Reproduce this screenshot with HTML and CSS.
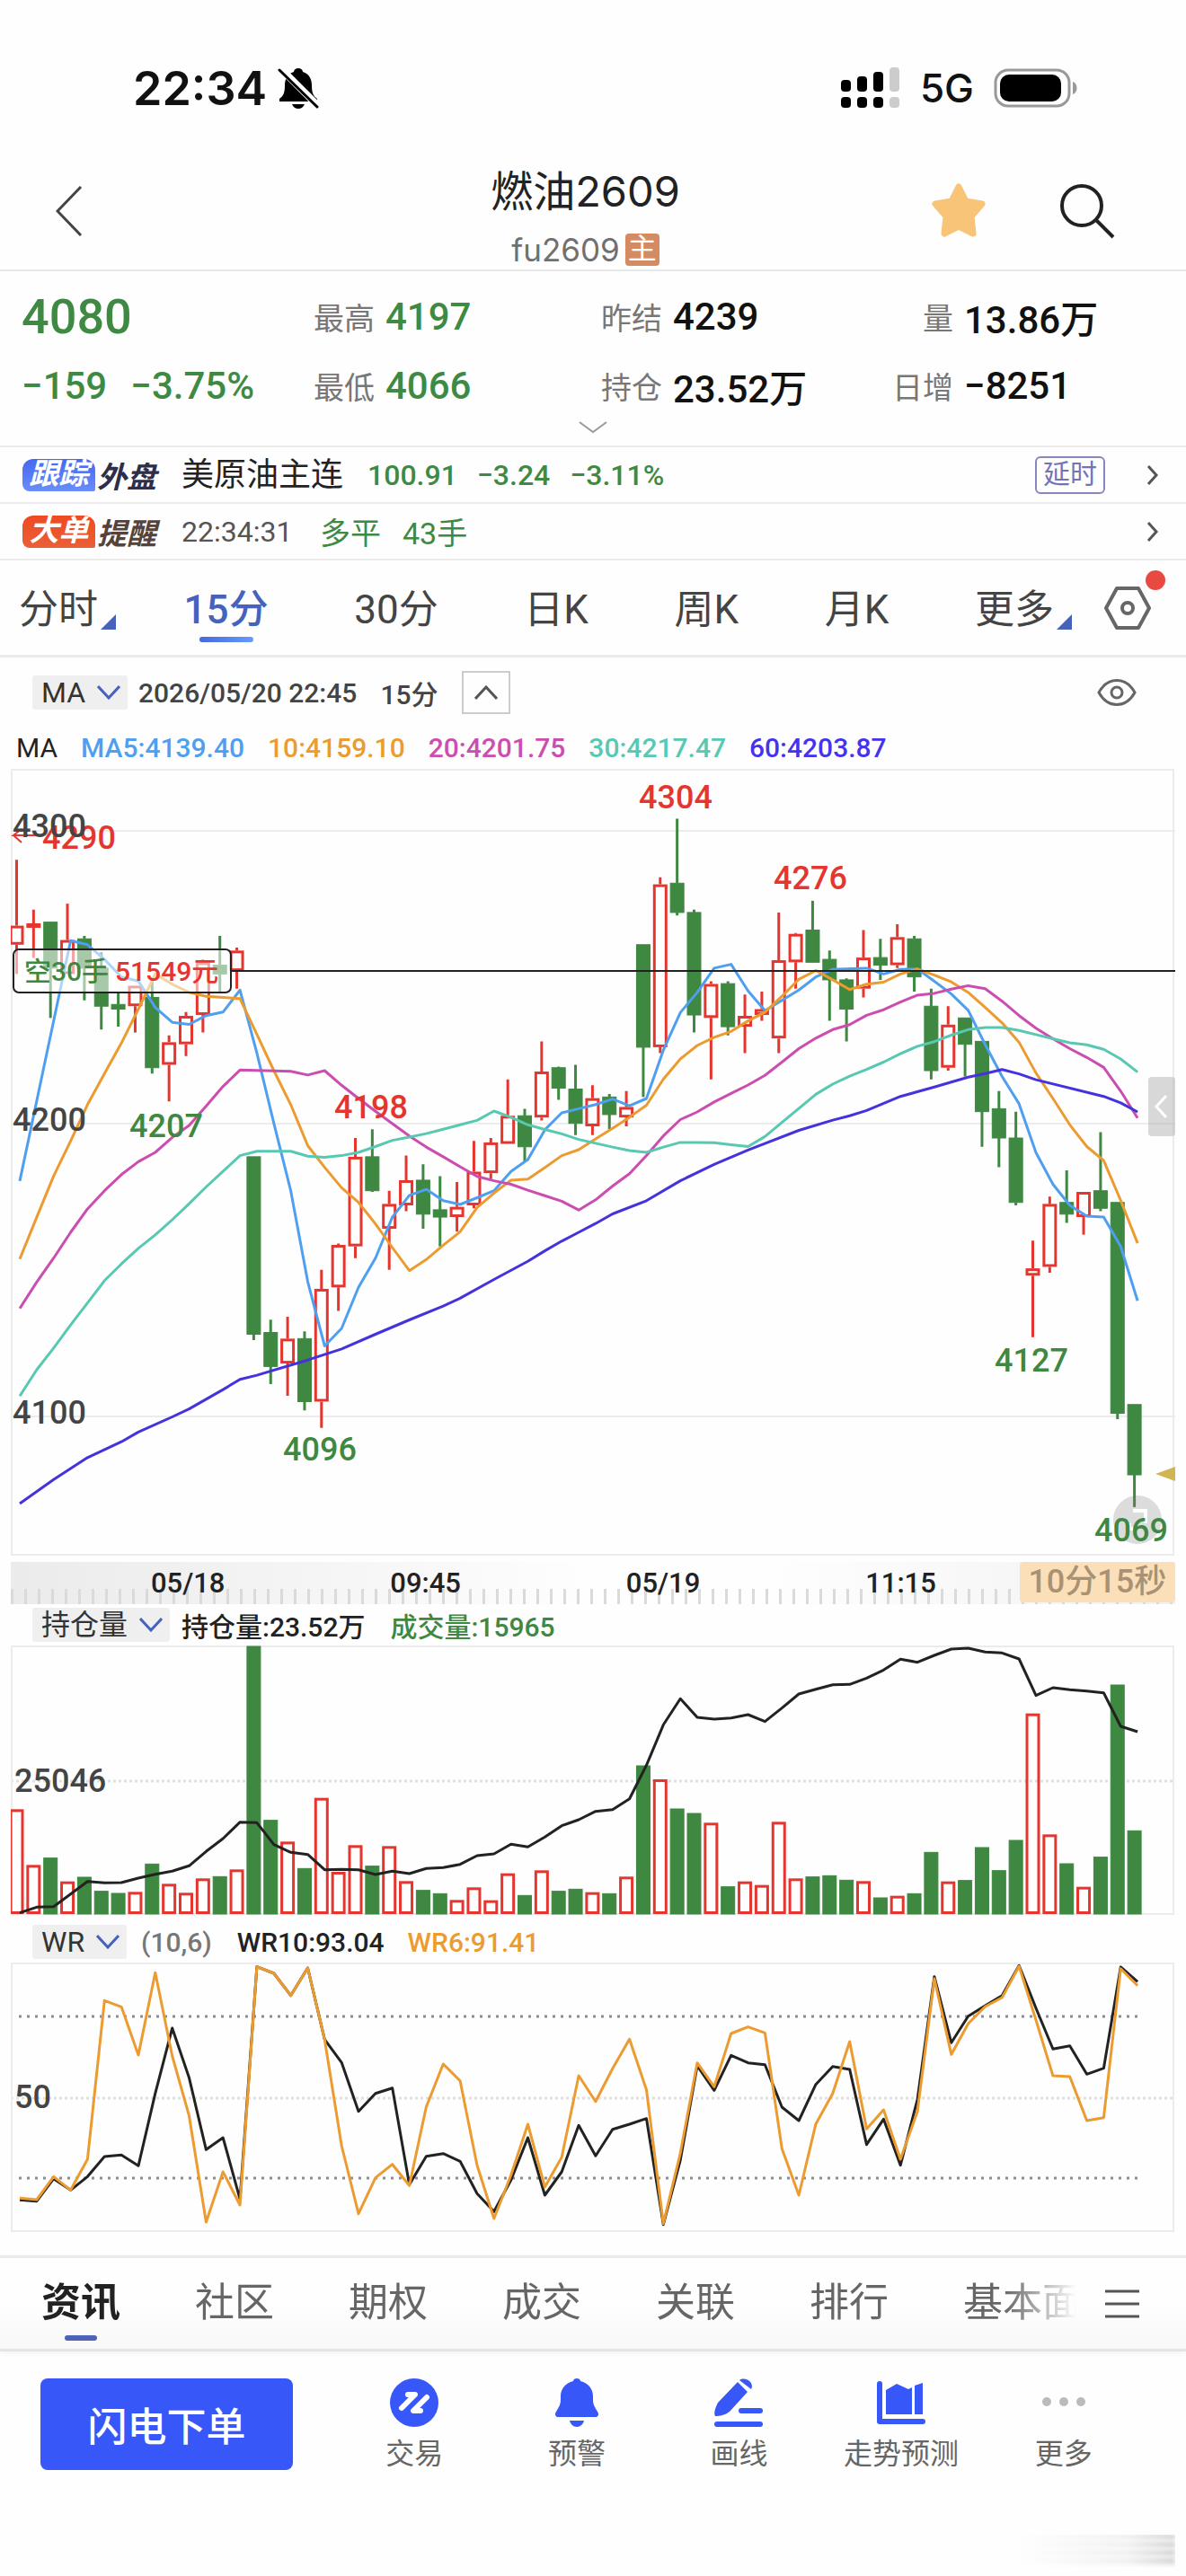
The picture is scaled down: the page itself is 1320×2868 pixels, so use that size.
FILE: index.html
```html
<!DOCTYPE html>
<html lang="zh-Hans">
<head>
  <meta charset="UTF-8">
  <title>燃油2609</title>
  <meta name="viewport" content="width=device-width, initial-scale=1">
  <link rel="stylesheet" href="styles.css">
</head>
<body>
  <!-- 状态栏 -->
  <div class="statusbar">
    <div class="status-left">
      <span class="clock">22:34</span>
      <svg width="46" height="46" viewBox="0 0 46 46">
        <path d="M23 1c3 0 5 2 5 4 7 2 10 8 10 15 0 9 2 12 6 15v3H2v-3c4-3 6-6 6-15 0-7 3-13 10-15 0-2 2-4 5-4zM16 41h14c-1 3-4 5-7 5s-6-2-7-5z"/>
        <path d="M3 1l42 42" stroke="#fff" stroke-width="8"/>
        <path d="M2 3l42 41" stroke="#000" stroke-width="3" stroke-linecap="round"/>
      </svg>
    </div>
    <div class="status-right">
      <svg width="66" height="46" viewBox="0 0 66 46">
        <g>
          <rect x="0" y="14" width="11" height="13" rx="4"/>
          <rect x="18" y="10" width="11" height="17" rx="4"/>
          <rect x="36" y="5" width="11" height="22" rx="4"/>
          <rect x="54" y="0" width="11" height="27" rx="4" fill="#ccc"/>
          <rect x="0" y="33" width="11" height="12" rx="4"/>
          <rect x="18" y="33" width="11" height="12" rx="4"/>
          <rect x="36" y="33" width="11" height="12" rx="4"/>
          <rect x="54" y="33" width="11" height="12" rx="4" fill="#ccc"/>
        </g>
      </svg>
      <span class="network">5G</span>
      <svg width="94" height="44" viewBox="0 0 94 44">
        <rect x="2" y="2" width="82" height="40" rx="14" fill="none" stroke="#999" stroke-width="3"/>
        <rect x="7" y="7" width="68" height="30" rx="10"/>
        <path d="M88 15c6 2 6 12 0 14z" fill="#999"/>
      </svg>
    </div>
  </div>

  <!-- 标题 -->
  <header class="header">
    <button class="icon-btn" aria-label="返回">
      <svg width="30" height="56" viewBox="0 0 30 56" fill="none" stroke="#444" stroke-width="3"><path d="M28 1L2 28l26 27"/></svg>
    </button>
    <div class="title-box">
      <h1 class="title">燃油2609</h1>
      <div class="subtitle">fu2609<span class="badge-main">主</span></div>
    </div>
    <div class="header-tools">
      <button class="icon-btn" aria-label="自选">
        <svg width="62" height="62" viewBox="0 0 62 62"><path d="M31 4l8 16 18 3-12 14 2 19-16-8-16 8 2-19L5 23l18-3z" fill="#f7c478" stroke="#f7c478" stroke-width="7" stroke-linejoin="round"/></svg>
      </button>
      <button class="icon-btn" aria-label="搜索">
        <svg width="62" height="62" viewBox="0 0 62 62" fill="none" stroke="#222" stroke-width="4"><circle cx="25" cy="25" r="22"/><path d="M41 41l19 19"/></svg>
      </button>
    </div>
  </header>

  <!-- 行情 -->
  <section class="quote">
    <div class="quote-grid">
      <div class="price down">4080</div>
      <div class="cell"><span class="label">最高</span><span class="num down">4197</span></div>
      <div class="cell"><span class="label">昨结</span><span class="num">4239</span></div>
      <div class="cell"><span class="label label-right">量</span><span class="num">13.86万</span></div>
      <div class="change down"><span>−159</span><span>−3.75%</span></div>
      <div class="cell"><span class="label">最低</span><span class="num down">4066</span></div>
      <div class="cell"><span class="label">持仓</span><span class="num">23.52万</span></div>
      <div class="cell"><span class="label label-right">日增</span><span class="num">−8251</span></div>
    </div>
    <button class="quote-more" aria-label="展开">
      <svg width="32" height="14" viewBox="0 0 32 14" fill="none" stroke="#999" stroke-width="2"><path d="M1 1l15 11L31 1"/></svg>
    </button>
  </section>

  <a class="news" href="#">
    <span class="tag tag-blue">跟踪</span><span class="tag-text tag-navy">外盘</span>
    <span class="news-name">美原油主连</span>
    <span class="news-num down"><b>100.91</b><b>−3.24</b><b>−3.11%</b></span>
    <span class="delay">延时</span>
    <svg class="arrow" width="14" height="22" viewBox="0 0 14 22" fill="none" stroke="#555" stroke-width="3"><path d="M2 1l9 10-9 10"/></svg>
  </a>
  <a class="news" href="#">
    <span class="tag tag-red">大单</span><span class="tag-text tag-brown">提醒</span>
    <span class="news-time">22:34:31</span>
    <span class="news-deal down"><span>多平</span><span>43手</span></span>
    <svg class="arrow" width="14" height="22" viewBox="0 0 14 22" fill="none" stroke="#555" stroke-width="3"><path d="M2 1l9 10-9 10"/></svg>
  </a>

  <!-- 周期 -->
  <nav class="periods">
    <div class="period-list">
      <button class="period has-more">分时</button>
      <button class="period active">15分</button>
      <button class="period">30分</button>
      <button class="period">日K</button>
      <button class="period">周K</button>
      <button class="period">月K</button>
      <button class="period has-more">更多</button>
    </div>
    <button class="icon-btn setting" aria-label="设置">
      <svg width="52" height="48" viewBox="0 0 52 48" fill="none" stroke="#666" stroke-width="4"><path d="M14 2h24l12 22-12 22H14L2 24z" stroke-linejoin="round"/><circle cx="26" cy="24" r="6"/></svg>
      <i class="dot"></i>
    </button>
  </nav>

  <main class="charts">
    <div class="toolbar">
      <label class="drop">
        <select aria-label="主图指标"><option>MA</option></select>
        <svg width="26" height="16" viewBox="0 0 26 16"><path d="M1 1l12 13L25 1"/></svg>
      </label>
      <span class="tool-date">2026/05/20 22:45</span>
      <span class="tool-period">15分</span>
      <button class="fold" aria-label="收起">
        <svg width="26" height="16" viewBox="0 0 26 16" fill="none" stroke="#555" stroke-width="3"><path d="M1 15L13 2l12 13"/></svg>
      </button>
      <button class="icon-btn eye" aria-label="显示">
        <svg width="44" height="32" viewBox="0 0 44 32" fill="none" stroke="#666" stroke-width="3"><path d="M2 16C12-2 32-2 42 16 32 34 12 34 2 16z"/><circle cx="22" cy="16" r="6"/></svg>
      </button>
    </div>
    <div class="legend">
      <span class="legend-name">MA</span>
      <span class="ma5">MA5:4139.40</span>
      <span class="ma10">10:4159.10</span>
      <span class="ma20">20:4201.75</span>
      <span class="ma30">30:4217.47</span>
      <span class="ma60">60:4203.87</span>
    </div>

    <svg class="chart" viewBox="0 0 1296 876">
      <g class="grid">
        <path d="M0 69H1296M0 395H1296M0 721H1296"/>
        <rect x="1" y="1" width="1293" height="874"/>
      </g>
      <g id="candles"></g>
      <g id="ma-lines" class="lines"></g>
      <path d="M245 225H1296" stroke="#222" stroke-width="2"/>
      <rect x="3" y="201" width="242" height="48" rx="6" fill="#fff" fill-opacity=".55" stroke="#222" stroke-width="2"/>
      <g class="pos-text">
        <text x="15" y="236" class="t-green">空30手</text>
        <text x="116" y="236" class="t-red">51549元</text>
      </g>
      <circle cx="1254" cy="836" r="27" fill="#777" fill-opacity=".25"/>
      <path d="M1249 826h14v14M1249 846h-4v-6" fill="none" stroke="#fff" stroke-width="4"/>
      <g class="marks t-red">
        <path d="M36 74H3l9-7M3 74l9 8" fill="none" stroke="#e5352f" stroke-width="2"/>
        <text x="76" y="89">4290</text>
        <text x="401" y="389">4198</text>
        <text x="740" y="44">4304</text>
        <text x="890" y="134">4276</text>
      </g>
      <g class="marks t-green">
        <text x="173" y="410">4207</text>
        <text x="344" y="770">4096</text>
        <text x="1136" y="671">4127</text>
        <text x="1247" y="860">4069</text>
      </g>
      <g class="scale">
        <text x="2" y="76">4300</text>
        <text x="2" y="403">4200</text>
        <text x="2" y="729">4100</text>
      </g>
      <path d="M1274 785l22-8v16z" fill="#d0b555"/>
      <rect x="1266" y="343" width="30" height="66" rx="4" fill="#aaa" fill-opacity=".45"/>
      <path d="M1286 364l-11 12 11 12" fill="none" stroke="#fff" stroke-width="3"/>
    </svg>

    <div class="axis">
      <span>05/18</span><span>09:45</span><span>05/19</span><span>11:15</span>
      <span class="countdown">10分15秒</span>
    </div>

    <div class="panel-head">
      <label class="drop">
        <select aria-label="副图指标一"><option>持仓量</option></select>
        <svg width="26" height="16" viewBox="0 0 26 16"><path d="M1 1l12 13L25 1"/></svg>
      </label>
      <span class="v-oi">持仓量:23.52万</span>
      <span class="v-vol">成交量:15965</span>
    </div>
    <svg class="chart" viewBox="0 0 1296 300">
      <g class="grid">
        <path d="M0 151H1296" class="dotted"/>
        <rect x="1" y="1" width="1293" height="298"/>
      </g>
      <g id="volumes"></g>
      <g id="oi-line" class="lines"></g>
      <g class="scale"><text x="4" y="163">25046</text></g>
    </svg>

    <div class="panel-head panel-wr">
      <label class="drop">
        <select aria-label="副图指标二"><option>WR</option></select>
        <svg width="26" height="16" viewBox="0 0 26 16"><path d="M1 1l12 13L25 1"/></svg>
      </label>
      <span class="v-param">(10,6)</span>
      <span class="v-wr10">WR10:93.04</span>
      <span class="v-wr6">WR6:91.41</span>
    </div>
    <svg class="chart" viewBox="0 0 1296 300">
      <g class="grid">
        <path d="M0 151H1296" class="dotted"/>
        <path d="M9 60H1254M9 240H1254" class="limit"/>
        <rect x="1" y="1" width="1293" height="298"/>
      </g>
      <g id="wr-lines" class="lines"></g>
      <g class="scale"><text x="4" y="162">50</text></g>
    </svg>
  </main>

  <!-- 底部栏目 -->
  <nav class="sections">
    <div class="section-list">
      <a class="active" href="#">资讯</a>
      <a href="#">社区</a>
      <a href="#">期权</a>
      <a href="#">成交</a>
      <a href="#">关联</a>
      <a href="#">排行</a>
      <a href="#">基本面</a>
    </div>
    <button class="icon-btn" aria-label="菜单">
      <svg width="38" height="32" viewBox="0 0 38 32" stroke="#555" stroke-width="3"><path d="M0 2h38M0 16h38M0 30h38"/></svg>
    </button>
  </nav>

  <footer class="actions">
    <button class="order">闪电下单</button>
    <div class="action-list">
      <button class="action">
        <svg viewBox="0 0 54 54"><circle cx="27" cy="27" r="27"/><path d="M20 18h8L13 33M41 21L26 36h8" fill="none" stroke="#fff" stroke-width="6" stroke-linecap="round" stroke-linejoin="round"/></svg>
        交易
      </button>
      <button class="action">
        <svg viewBox="0 0 54 54"><path d="M23 3c0-4 8-4 8 0 9 2 14 9 14 17 0 8 0 9 5 17 2 3 1 6-3 6H7c-4 0-5-3-3-6 5-8 5-9 5-17C9 12 14 5 23 3zM19 47h16c-1 4-4 7-8 7s-7-3-8-7z"/></svg>
        预警
      </button>
      <button class="action">
        <svg viewBox="0 0 54 54"><path d="M26 4l11 11-20 22c-5 4-11 5-16 5-2-3 0-9 3-15zM28 2c7-5 17 3 13 10z"/><rect x="27" y="33" width="27" height="6" rx="3"/><rect y="48" width="54" height="6" rx="3"/></svg>
        画线
      </button>
      <button class="action">
        <svg viewBox="0 0 54 54"><path d="M3 6v42h48" fill="none" stroke="#3757f8" stroke-width="6" stroke-linecap="round" stroke-linejoin="round"/><path d="M10 13l12-7 13 6 4-2v30H10zM42 8l9-3v35h-9z"/></svg>
        走势预测
      </button>
      <button class="action">
        <svg viewBox="0 0 54 54"><g fill="#bbb"><circle cx="8" cy="26" r="5"/><circle cx="27" cy="26" r="5"/><circle cx="46" cy="26" r="5"/></g></svg>
        更多
      </button>
    </div>
    <div class="smudge"></div>
  </footer>

  <script src="chart.js"></script>
</body>
</html>
```
FILE: styles.css
```css
* {
  box-sizing: border-box;
}
body {
  margin: 0;
  background: #fefefe;
  color: #111;
  font-family: Roboto, "Noto Sans CJK SC", sans-serif;
  font-size: 32px;
  overflow-x: hidden;
}
button, select {
  font: inherit;
  color: inherit;
  border: 0;
  background: none;
  padding: 0;
  margin: 0;
  cursor: pointer;
}
a {
  color: inherit;
  text-decoration: none;
}
svg {
  display: block;
  flex: none;
}
.down { color: #3f8a43; }
.icon-btn {
  display: flex;
  align-items: center;
}

/* 状态栏 */
.statusbar {
  height: 180px;
  padding: 16px 120px 0 148px;
  display: flex;
  align-items: center;
  justify-content: space-between;
  font-family: Inter, "Liberation Sans", sans-serif;
}
.status-left, .status-right {
  display: flex;
  align-items: center;
}
.status-left { gap: 12px; }
.status-right { gap: 22px; }
.clock {
  font-size: 52px;
  font-weight: 600;
}
.network {
  font-size: 44px;
  font-weight: 500;
}

/* 标题 */
.header {
  display: grid;
  grid-template-columns: 1fr auto 1fr;
  height: 122px;
  padding: 0 79px 0 62px;
  border-bottom: 2px solid #e8e8e8;
}
.header .icon-btn { height: 110px; }
.header-tools {
  display: flex;
  justify-content: flex-end;
  gap: 81px;
}
.title-box {
  padding-top: 8px;
  text-align: center;
  font-family: Inter, "Noto Sans CJK SC", sans-serif;
}
.title {
  margin: 0;
  font-size: 47px;
  line-height: 50px;
  font-weight: 400;
  color: #222;
}
.subtitle {
  display: flex;
  align-items: center;
  justify-content: center;
  gap: 6px;
  margin-top: 20px;
  font-size: 35px;
  line-height: 40px;
  color: #707070;
}
.badge-main {
  width: 38px;
  height: 36px;
  line-height: 34px;
  border-radius: 4px;
  background: #d58b62;
  color: #fff;
  font-size: 32px;
}

/* 行情 */
.quote {
  padding-top: 12px;
  border-bottom: 2px solid #ebebeb;
}
.quote-grid {
  display: grid;
  grid-template-columns: 325fr 320fr 324fr 327fr;
  grid-auto-rows: 77px;
  align-items: center;
  padding-left: 24px;
}
.price {
  font-size: 54px;
  font-weight: 500;
}
.change {
  display: flex;
  gap: 26px;
  font-size: 42px;
  font-weight: 500;
}
.cell {
  display: flex;
  align-items: center;
  gap: 12px;
}
.label {
  min-width: 68px;
  font-size: 34px;
  color: #777;
}
.label-right { text-align: right; }
.num {
  font-size: 42px;
  font-weight: 500;
}
.quote-more {
  display: block;
  width: 100%;
  height: 28px;
}
.quote-more svg { margin: 0 auto 12px; }

/* 消息条 */
.news {
  display: flex;
  align-items: center;
  height: 63px;
  padding: 0 30px 0 25px;
  border-bottom: 2px solid #ebebeb;
}
.tag {
  width: 81px;
  height: 36px;
  line-height: 34px;
  border-radius: 12px 12px 2px 8px;
  text-align: center;
  color: #fff;
  font-size: 33px;
  font-weight: 700;
  font-style: italic;
}
.tag-blue { background: linear-gradient(#4468f0, #6a8dfa); }
.tag-red { background: linear-gradient(#ee4a22, #ea6038); }
.tag-text {
  width: 96px;
  padding-left: 2px;
  font-size: 33px;
  font-weight: 700;
  font-style: italic;
}
.tag-navy { color: #2e2e48; }
.tag-brown { color: #55433a; }
.news-name {
  width: 207px;
  font-size: 36px;
  line-height: 40px;
  color: #222;
}
.news-num {
  display: flex;
  gap: 22px;
}
.news-num b { font-weight: 500; }
.news-time {
  width: 154px;
  color: #555;
}
.news-deal {
  display: flex;
  gap: 24px;
  font-size: 34px;
}
.delay {
  margin-left: auto;
  width: 78px;
  height: 42px;
  line-height: 36px;
  border: 2px solid #8786bd;
  border-radius: 6px;
  text-align: center;
  font-size: 30px;
  color: #7573b3;
}
.news .arrow { margin-left: auto; }
.news .delay + .arrow { margin-left: 46px; }

/* 周期 */
.periods {
  display: flex;
  align-items: center;
  height: 108px;
  padding: 0 39px 0 21px;
  border-bottom: 3px solid #ebebeb;
}
.period-list {
  flex: 1;
  display: flex;
  justify-content: space-between;
}
.period {
  position: relative;
  height: 105px;
  padding-bottom: 4px;
  font-size: 44px;
  color: #444;
}
.period.active {
  color: #4662bd;
  font-weight: 500;
}
.period.active::after {
  content: "";
  position: absolute;
  left: 50%;
  bottom: 14px;
  width: 60px;
  height: 6px;
  margin-left: -30px;
  border-radius: 3px;
  background: linear-gradient(90deg, #4668e0, #669bff);
}
.period.has-more::after {
  content: "";
  position: absolute;
  right: -20px;
  bottom: 28px;
  border-left: 17px solid transparent;
  border-bottom: 17px solid #4662bd;
}
.setting {
  position: relative;
  margin-left: 56px;
}
.dot {
  position: absolute;
  right: -16px;
  top: -18px;
  width: 22px;
  height: 22px;
  border-radius: 50%;
  background: #e84a42;
}

/* 图表 */
.charts {
  padding: 15px 12px 26px;
}
.toolbar {
  display: flex;
  align-items: center;
  height: 48px;
  padding: 0 43px 0 24px;
  font-size: 30px;
  color: #444;
}
.drop {
  display: flex;
  align-items: center;
  position: relative;
  height: 38px;
  background: #efefef;
  border-radius: 3px;
  font-size: 32px;
  color: #333;
}
.drop select {
  appearance: none;
  height: 38px;
  padding: 0 46px 0 10px;
}
.drop svg {
  position: absolute;
  right: 8px;
  pointer-events: none;
  fill: none;
  stroke: #4662bd;
  stroke-width: 3;
}
.tool-date {
  margin-left: 12px;
  font-weight: 500;
}
.tool-period {
  margin-left: 26px;
  font-weight: 500;
}
.fold {
  display: flex;
  align-items: center;
  justify-content: center;
  width: 54px;
  height: 48px;
  margin-left: 26px;
  border: 2px solid #ccc;
}
.eye { margin-left: auto; }
.legend {
  display: flex;
  gap: 26px;
  height: 40px;
  margin: 18px 0 3px;
  padding-left: 6px;
  font-size: 30px;
  font-weight: 500;
  line-height: 40px;
}
.legend-name {
  color: #222;
  font-weight: 400;
}
.ma5 { color: #4f9ff0; }
.ma10 { color: #ec9b30; }
.ma20 { color: #cc4db0; }
.ma30 { color: #58c8b2; }
.ma60 { color: #4433ee; }
.chart {
  width: 100%;
  height: auto;
}
.grid * {
  fill: none;
  stroke: #ececec;
  stroke-width: 2;
}
.grid .dotted {
  stroke: #e0e0e0;
  stroke-width: 3;
  stroke-dasharray: 3 3;
}
.grid .limit {
  stroke: #8c8c96;
  stroke-width: 3;
  stroke-dasharray: 3 6;
}
.lines polyline {
  fill: none;
  stroke-width: 3;
  stroke-linejoin: round;
}
.up-bar {
  fill: none;
  stroke: #e5352f;
  stroke-width: 3;
}
.down-bar {
  fill: #3e8841;
  stroke: #3e8841;
}
.scale text {
  font-size: 36px;
  font-weight: 500;
  fill: #444;
}
.marks text {
  font-size: 36px;
  font-weight: 500;
  text-anchor: middle;
}
.pos-text text {
  font-size: 30px;
  font-weight: 500;
}
.t-red { fill: #e5352f; }
.t-green { fill: #3e8841; }
.axis {
  display: flex;
  height: 47px;
  margin: 7px 0 4px;
  padding-left: 65px;
  font-size: 31px;
  font-weight: 500;
  line-height: 47px;
  text-align: center;
  color: #222;
  background:
    repeating-linear-gradient(90deg, #dadada 0 3px, transparent 3px 15px) 0 100% / 100% 17px no-repeat,
    linear-gradient(90deg, #ebebeb, #fefefe 50%, #fefefe 65%, #f2f2f2);
}
.axis span { flex: 264; }
.axis .countdown {
  flex: 173;
  height: 45px;
  border-radius: 4px;
  background: #fadfb8;
  color: #a99273;
  font-size: 36px;
  line-height: 45px;
}
.panel-head {
  display: flex;
  align-items: center;
  height: 38px;
  margin-bottom: 4px;
  padding-left: 24px;
  font-size: 30px;
  font-weight: 500;
}
.panel-head .drop { font-weight: 400; }
.panel-wr {
  margin: 11px 0 4px;
}
.v-oi {
  margin-left: 13px;
  color: #222;
}
.v-vol {
  margin-left: 28px;
  color: #3e8841;
}
.v-param {
  margin-left: 16px;
  color: #777;
}
.v-wr10 {
  margin-left: 28px;
  color: #222;
}
.v-wr6 {
  margin-left: 26px;
  color: #ec9b30;
}

/* 底部栏目 */
.sections {
  display: flex;
  align-items: center;
  height: 107px;
  padding: 0 52px 0 46px;
  border-top: 3px solid #ebebeb;
  border-bottom: 3px solid #e4e4e4;
  background: linear-gradient(#fefefe 50%, #f8f8f8);
  box-shadow: 0 2px 6px #0000000c;
}
.section-list {
  flex: 1;
  display: flex;
  gap: 83px;
  margin-right: 32px;
  overflow: hidden;
  white-space: nowrap;
  font-size: 44px;
  line-height: 101px;
  color: #666;
  -webkit-mask-image: linear-gradient(90deg, #000 93%, transparent);
  mask-image: linear-gradient(90deg, #000 93%, transparent);
}
.section-list a { position: relative; }
.section-list .active {
  color: #222;
  font-weight: 700;
}
.section-list .active::after {
  content: "";
  position: absolute;
  left: 26px;
  bottom: 9px;
  width: 36px;
  height: 6px;
  border-radius: 3px;
  background: #4e62b8;
}

/* 操作栏 */
.actions {
  position: relative;
  display: flex;
  align-items: flex-start;
  height: 248px;
  padding: 30px 46px 0 45px;
}
.order {
  width: 281px;
  height: 102px;
  border-radius: 8px;
  background: #3757f8;
  color: #fff;
  font-size: 44px;
  font-weight: 500;
}
.action-list {
  flex: 1;
  display: flex;
  margin-left: 45px;
}
.action {
  flex: 1;
  display: flex;
  flex-direction: column;
  align-items: center;
  gap: 10px;
  line-height: 40px;
  color: #666;
  white-space: nowrap;
}
.action svg {
  width: 54px;
  height: 54px;
  fill: #3757f8;
}
.smudge {
  position: absolute;
  right: 12px;
  bottom: 8px;
  width: 176px;
  height: 36px;
  background: repeating-linear-gradient(#bbb 0 3px, #eee 5px 9px);
  -webkit-mask-image: linear-gradient(90deg, transparent, #0004 70%, #000c);
  mask-image: linear-gradient(90deg, transparent, #0004 70%, #000c);
  filter: blur(2px);
}
```
FILE: chart.js
```javascript
const STEP = 18.85;

// [涨跌, 最高, 实体上沿, 实体下沿, 最低]，1 为阳线
const candles = [
  [1,4290,4267.5,4261,4251],[1,4273,4268.3,4267.3,4256.5],[0,4268.7,4268.7,4253,4236],[1,4275,4262.6,4251,4251],
  [0,4264,4263,4253,4242],[0,4258.5,4253,4240,4232],[0,4244.5,4240.6,4239,4233],[1,4247,4247,4240,4231],
  [0,4249,4243,4219,4217],[1,4230,4227.7,4220,4207.5],[1,4238,4236.7,4227,4223],[1,4256,4255,4237,4231],
  [0,4264,4254,4251,4245],[1,4260,4259,4252,4246],[0,4188.6,4188.6,4128,4126],[0,4133,4128.6,4117,4111],
  [1,4134,4126.5,4118,4107],[0,4129,4126.5,4105,4102],[1,4150,4143.5,4105,4096],[1,4159,4158.5,4144,4136],
  [1,4195,4188.6,4158,4154],[0,4198,4188.6,4177,4176.6],[1,4177,4172.5,4164,4150],[1,4189,4180.6,4172,4170],
  [0,4186,4180.6,4169,4164],[0,4182,4170.5,4168,4158],[1,4180,4171.5,4168,4163],[1,4194,4183.5,4172,4171],
  [1,4195,4193.5,4183,4181],[1,4215,4202.6,4193,4193],[0,4205,4202.6,4192,4187],[1,4228,4217.7,4202,4201],
  [0,4219.4,4219,4212,4208],[0,4220,4211.7,4200,4196],[1,4213,4208.6,4199,4196],[0,4210,4209,4203,4198],
  [1,4211,4205.6,4202,4199],[0,4261,4261,4226,4209],[1,4284,4281.6,4226,4224],[0,4304,4282,4272,4271],
  [0,4273,4272,4237,4231],[1,4248.5,4247.6,4236,4215],[0,4248.5,4247.7,4233,4230],[1,4244,4236.7,4233,4224],
  [1,4245,4239,4237,4235],[1,4272,4255.7,4229,4224],[1,4265,4264.7,4255,4246],[0,4276,4266,4255,4255],
  [0,4259,4256,4249,4235],[0,4249.5,4249,4239,4228],[1,4266,4256.6,4246,4243],[0,4263,4256.6,4254,4249],
  [1,4268,4263.6,4254,4253],[0,4264,4263,4250,4245],[0,4246,4240,4218,4215],[1,4240,4233.7,4219,4218],
  [0,4236,4236,4227,4216],[0,4228,4228,4204,4192],[0,4211,4205,4195,4185],[0,4204,4195,4173,4172],
  [1,4160,4150.5,4148,4127],[1,4175,4172.5,4151,4149],[0,4184,4173,4169,4166],[1,4176.6,4176.6,4168,4162],
  [0,4197,4177,4171,4170],[0,4173,4173,4101,4099],[0,4104,4104,4080,4069]
];

const ma5 = [[0,4180.3],[3,4262.4],[4,4261],[5,4256],[6,4250],[7,4248.6],[8,4239.6],[9,4234.5],[10,4233.8],[11,4236.8],[12,4238],[13,4245.5],
  [14,4224],[15,4200],[16,4177],[17,4146],[18,4124],[19,4130],[20,4144],[21,4154],[22,4168],[23,4175.4],[24,4177.5],[25,4173.6],[26,4172.3],
  [27,4174.6],[28,4177],[29,4183.6],[30,4187.6],[31,4197.8],[32,4203.6],[33,4205],[34,4206.4],[35,4208.3],[36,4206],[37,4208.5],[38,4225],
  [39,4237.8],[40,4244.7],[41,4253],[42,4254.3],[43,4245.2],[44,4238.5],[45,4242],[46,4245.5],[47,4250],[48,4252.6],[50,4253],[51,4251],
  [52,4252.6],[53,4252.7],[54,4248.5],[55,4244.2],[56,4238.6],[57,4226.9],[58,4216],[59,4206.7],[60,4190],[61,4179.2],[62,4172],[63,4168.3],
  [64,4168],[65,4158],[66,4139.4]];
const ma10 = [[0,4153.7],[1,4168],[2,4182],[3,4194],[4,4206.4],[5,4217],[6,4227.4],[7,4239],[8,4251],[9,4247.5],[10,4244.7],[11,4243.4],
  [13,4242.6],[14,4230.4],[15,4218],[16,4206.4],[17,4192.4],[18,4185],[19,4178],[20,4173],[21,4165.7],[22,4157.6],[23,4149.7],[24,4153.5],
  [25,4158.4],[26,4163],[27,4171.3],[28,4176.2],[29,4180.6],[30,4181],[31,4184.9],[32,4189],[33,4191],[34,4194.7],[35,4198.3],[36,4202.1],
  [37,4206.2],[38,4215.1],[39,4222],[40,4226.6],[41,4229.4],[42,4231.4],[43,4235],[44,4238],[45,4243.4],[46,4249.2],[47,4252.2],[48,4249],
  [49,4245.7],[50,4247.5],[51,4248.2],[52,4251],[53,4252.7],[54,4250.6],[55,4248.3],[56,4244.7],[57,4239.6],[58,4234.3],[59,4227.7],
  [60,4217.2],[61,4208.5],[62,4199.5],[63,4192.1],[64,4187.3],[65,4173.7],[66,4159.1]];
const ma20 = [[0,4136.8],[1,4145.8],[2,4154],[3,4162.8],[4,4170.8],[5,4177],[6,4182.5],[7,4186.9],[8,4190.1],[9,4195.2],[10,4199.3],
  [11,4205.9],[12,4212.6],[13,4218.2],[16,4217.8],[17,4216.5],[18,4218],[19,4213],[20,4208.5],[21,4204.1],[22,4199.9],[23,4195.7],
  [24,4191.9],[25,4188.6],[26,4185.2],[27,4181.9],[28,4180.4],[29,4179.2],[30,4177.2],[31,4175.3],[32,4173.4],[33,4170.4],[34,4173.9],
  [35,4178.6],[36,4182.8],[37,4189],[38,4195.7],[39,4201.3],[40,4203.9],[41,4207.3],[42,4210.2],[43,4213.1],[44,4216.4],[45,4220.9],
  [46,4225.5],[47,4229.1],[48,4232],[49,4233.7],[50,4236.9],[51,4238.8],[52,4241.4],[53,4243.8],[54,4244.4],[55,4245.8],[56,4247],
  [57,4246],[58,4241.7],[59,4236.8],[60,4232.5],[61,4228.9],[62,4225.5],[63,4222.5],[64,4219.1],[65,4211],[66,4201.8]];
const ma30 = [[0,4106.9],[1,4115.9],[2,4123.3],[3,4131.2],[4,4138.7],[5,4146.3],[6,4152],[7,4157.3],[8,4161.9],[9,4167.1],[10,4172.6],
  [11,4178.3],[12,4183.6],[13,4189],[14,4190.5],[16,4190.5],[17,4188.8],[18,4188.4],[19,4189],[20,4190.1],[21,4192.1],[22,4194.2],
  [23,4195.3],[24,4196.5],[25,4198],[26,4199.5],[27,4201],[28,4204.2],[29,4202.1],[30,4199.5],[31,4197.9],[32,4196.4],[33,4194.5],
  [34,4193.2],[35,4191.9],[36,4190.7],[37,4190.1],[38,4191.9],[39,4193.5],[40,4193.5],[41,4193.4],[42,4192.7],[43,4192.1],[44,4195.5],
  [45,4200.3],[46,4205.1],[47,4209.9],[48,4213.4],[49,4216.1],[50,4218.4],[51,4220.9],[52,4223.8],[53,4226.3],[54,4227.9],[55,4230.1],
  [56,4232],[57,4232.7],[58,4232.7],[59,4231.7],[60,4230.3],[61,4228.9],[62,4227.5],[63,4226.8],[64,4225.3],[65,4222],[66,4217.5]];
const ma60 = [[0,4070.2],[2,4078.4],[4,4085.9],[6,4091.3],[7,4094.6],[9,4099.8],[10,4102.5],[12,4109.1],[13,4112.6],[14,4114],[17,4119.2],
  [19,4123],[21,4128],[23,4132.9],[25,4137.6],[26,4140.3],[28,4146.7],[30,4152.9],[31,4156.5],[32,4159.8],[33,4162.8],[34,4165.8],
  [35,4169.1],[37,4173.6],[39,4180.4],[41,4186],[43,4190.9],[46,4197.6],[48,4201.1],[49,4202.6],[50,4204.4],[52,4209.2],[54,4212.4],
  [56,4215.8],[57,4217],[58,4218.4],[59,4216.9],[60,4214.9],[64,4209.2],[65,4207],[66,4203.9]];

// 副图数据，满高为 894
const FULL = 894;
const volumes = [350,164,187,109,123,76,69,74,167,101,71,119,125,149,894,313,242,152,388,141,230,160,227,110,79,68,47,89,46,136,62,146,76,83,
  73,68,125,495,450,351,336,305,91,109,97,308,119,124,128,113,110,54,61,68,206,109,112,222,145,246,670,266,168,91,190,765,278];
const oi = [4,23,25,67,109,104,105,120,133,143,161,209,252,307,305,232,206,199,148,149,148,132,143,135,152,155,166,195,201,233,224,257,295,
  315,343,349,385,497,632,719,657,651,655,666,643,688,735,751,766,767,788,815,851,841,864,885,888,875,872,852,730,756,749,745,739,627,609];
const wr10 = [104,100,175,137,182,249,254,218,460,678,512,272,312,107,883,861,787,879,640,563,400,460,478,155,250,259,233,125,65,170,312,120,
  198,353,251,340,357,376,22,237,552,470,587,562,556,414,369,490,550,540,289,374,220,440,850,629,718,753,787,887,745,608,619,524,544,882,833];
const wr6 = [110,105,182,137,240,770,749,588,863,585,385,30,198,87,883,861,787,879,640,285,58,178,223,152,415,558,502,220,42,187,357,147,
  247,519,433,543,641,472,25,260,562,482,660,682,662,275,120,358,460,633,341,405,240,400,843,590,693,750,780,885,705,519,516,369,379,877,820];

function priceY(p) {
  return 68.6 + (4300 - p) * 3.261;
}
function panelY(v) {
  return 299 - v / FULL * 298;
}

// 一根柱：阳线空心，阴线实心
function bar(i, up, top, bottom) {
  const x = 6.5 + i * STEP;
  const h = Math.max(bottom - top - 3, 2);
  return up
    ? `<rect class="up-bar" x="${x - 6.5}" y="${top + 1.5}" width="13" height="${h}"/>`
    : `<rect class="down-bar" x="${x - 7.5}" y="${top}" width="15" height="${h + 3}"/>`;
}

function line(points, color, y) {
  const pts = points.map(([i, v]) => (10 + i * STEP).toFixed(1) + ',' + y(v).toFixed(1)).join(' ');
  return `<polyline points="${pts}" stroke="${color}"/>`;
}

function series(list) {
  return list.map((v, i) => [i, v]);
}

document.getElementById('candles').innerHTML = candles.map(([up, high, top, bottom, low], i) => {
  const x = 6.5 + i * STEP;
  const color = up ? '#e5352f' : '#3e8841';
  return `<path d="M${x} ${priceY(high)}V${priceY(top)}M${x} ${priceY(bottom)}V${priceY(low)}" stroke="${color}" stroke-width="3"/>`
    + bar(i, up, priceY(top), priceY(bottom));
}).join('');

document.getElementById('ma-lines').innerHTML =
  line(ma5, '#4f9ff0', priceY) +
  line(ma10, '#ec9b30', priceY) +
  line(ma20, '#cc4db0', priceY) +
  line(ma30, '#58c8b2', priceY) +
  line(ma60, '#4433dd', priceY);

document.getElementById('volumes').innerHTML =
  volumes.map((v, i) => bar(i, candles[i][0], panelY(v), 299)).join('');
document.getElementById('oi-line').innerHTML = line(series(oi), '#222', panelY);
document.getElementById('wr-lines').innerHTML =
  line(series(wr10), '#222', panelY) + line(series(wr6), '#ec9b30', panelY);
```
